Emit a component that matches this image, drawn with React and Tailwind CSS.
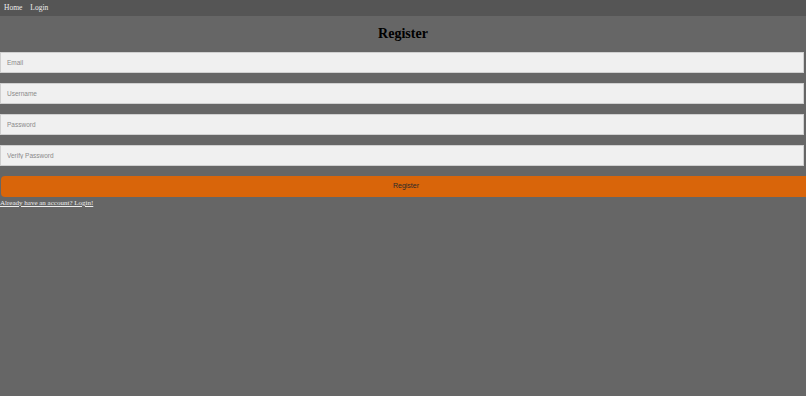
export default function App() {
  const fields = ["Email", "Username", "Password", "Verify Password"];
  return (
    <div className="min-h-[396px] w-full overflow-hidden bg-[#666666] font-['Liberation_Serif',serif]">
      <nav className="flex h-[16px] items-center gap-[8px] bg-[#555555] pl-[4px] text-[7.5px] text-[#eeeeee]">
        <a>Home</a>
        <a>Login</a>
      </nav>
      <h1 className="mt-[9px] mb-[9px] text-center text-[14px] font-bold leading-[18px] text-black">Register</h1>
      <form className="flex flex-col">
        {fields.map((f) => (
          <input
            key={f}
            placeholder={f}
            type={f.includes("Password") ? "password" : "text"}
            className="mb-[10px] box-border h-[21px] w-[804px] border border-[#d0d0d0] bg-[#f0f0f0] pl-[6px] font-['Liberation_Sans',sans-serif] text-[6.5px] text-[#333] outline-none placeholder:text-[#8a8a8a]"
          />
        ))}
        <button
          type="button"
          className="ml-[1px] h-[21px] w-[810px] shrink-0 rounded-[4px] bg-[#d9650a] font-['Liberation_Sans',sans-serif] text-[7px] text-[#2a2a2a]"
        >
          Register
        </button>
      </form>
      <a className="block text-[7px] leading-[12px] text-[#eeeeee] underline">Already have an account? Login!</a>
    </div>
  );
}
